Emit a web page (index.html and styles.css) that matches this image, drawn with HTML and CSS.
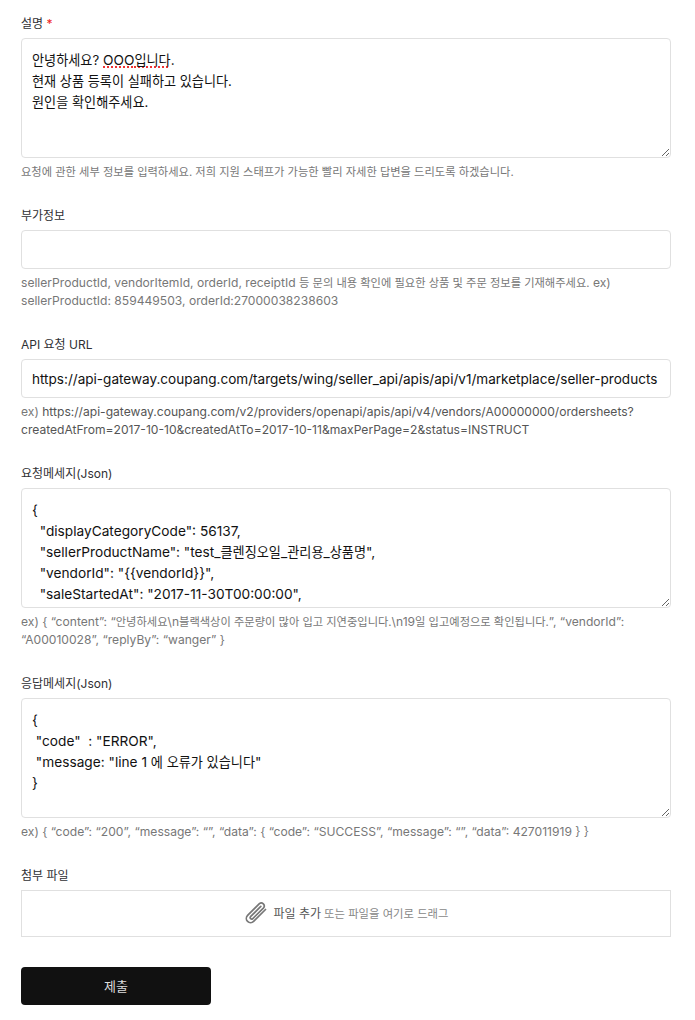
FILE: index.html
```html
<!DOCTYPE html>
<html lang="ko">
<head>
<meta charset="utf-8">
<title>요청 양식</title>
<link rel="stylesheet" href="styles.css">
</head>
<body>
<form class="form">
  <div class="field">
    <label class="label">설명 <span class="req">*</span></label>
    <div class="area"><span class="ko">안녕하세요?</span> <span class="spell">OOO<span class="ko">입니다</span></span>.
<span class="ko">현재 상품 등록이 실패하고 있습니다.
원인을 확인해주세요.</span></div>
    <p class="hint"><span class="ko">요청에 관한 세부 정보를 입력하세요. 저희 지원 스태프가 가능한 빨리 자세한 답변을 드리도록 하겠습니다.</span></p>
  </div>
  <div class="field">
    <label class="label">부가정보</label>
    <div class="input"></div>
    <p class="hint">sellerProductId, vendorItemId, orderId, receiptId <span class="ko">등 문의 내용 확인에 필요한 상품 및 주문 정보를 기재해주세요.</span> ex) sellerProductId: 859449503, orderId:27000038238603</p>
  </div>
  <div class="field">
    <label class="label">API 요청 URL</label>
    <div class="input">https://api-gateway.coupang.com/targets/wing/seller_api/apis/api/v1/marketplace/seller-products</div>
    <p class="hint">ex) <span class="dark">https://api-gateway.coupang.com/v2/providers/openapi/apis/api/v4/vendors/A00000000/ordersheets?createdAtFrom=2017-10-10&amp;createdAtTo=2017-10-11&amp;maxPerPage=2&amp;status=INSTRUCT</span></p>
  </div>
  <div class="field">
    <label class="label">요청메세지(Json)</label>
    <div class="area">{
  "displayCategoryCode": 56137,
  "sellerProductName": "test_<span class="ko">클렌징오일</span>_<span class="ko">관리용</span>_<span class="ko">상품명</span>",
  "vendorId": "{{vendorId}}",
  "saleStartedAt": "2017-11-30T00:00:00",</div>
    <p class="hint">ex) { “content”: “<span class="ko">안녕하세요</span>\n<span class="ko">블랙색상이 주문량이 많아 입고 지연중입니다.</span>\n19<span class="ko">일 입고예정으로 확인됩니다.</span>”, “vendorId”: “A00010028”, “replyBy”: “wanger” }</p>
  </div>
  <div class="field">
    <label class="label">응답메세지(Json)</label>
    <div class="area">{
 "code"  : "ERROR",
 "message: "line 1 <span class="ko">에 오류가 있습니다</span>"
}</div>
    <p class="hint">ex) { “code”: “200”, “message”: “”, “data”: { “code”: “SUCCESS”, “message”: “”, “data”: 427011919 } }</p>
  </div>
  <div class="field">
    <label class="label">첨부 파일</label>
    <div class="drop">
      <svg class="clip" viewBox="0 0 24 24" width="24" height="24" fill="none" stroke="#777" stroke-width="1.7" stroke-linecap="round" stroke-linejoin="round" aria-hidden="true">
        <path d="M21.5 8.5L9.6 20.4a4.2 4.2 0 0 1-6-6L15.4 2.6a3 3 0 0 1 4.2 4.2L8.6 17.8a1.5 1.5 0 0 1-2.1-2.1L16.8 5.4"/>
      </svg>
      <span class="add">파일 추가</span>
      <span class="or">또는 파일을 여기로 드래그</span>
    </div>
  </div>
  <button class="submit" type="button">제출</button>
</form>
</body>
</html>
```
FILE: styles.css
```css
* { box-sizing: border-box; }

body {
  margin: 0;
  background: #fff;
  color: #111;
  font-family: Inter, "Noto Sans CJK KR", "Noto Sans", sans-serif;
}

.form {
  width: 650px;
  margin-left: 21px;
  padding-top: 14px;
  display: flex;
  flex-direction: column;
}

.field {
  display: flex;
  flex-direction: column;
  margin-bottom: 25px;
}

.label {
  display: block;
  height: 20px;
  line-height: 20px;
  margin-bottom: 4px;
  font-size: 12px;
  color: #2f3033;
}

.req { color: #e22; }

.area,
.input {
  border: 1px solid #e0e0e0;
  border-radius: 4px;
  background: #fff;
  font-size: 13.7px;
  line-height: 21px;
  color: #111;
}

.area {
  height: 120px;
  padding: 11px 10px 10px;
  white-space: pre-wrap;
  overflow: hidden;
  resize: vertical;
}

.area .ko { font-size: 0.96em; }

.input {
  height: 39px;
  padding: 9px 10px 8px;
  font-size: 13.56px;
  white-space: nowrap;
  overflow: hidden;
}

.spell {
  text-decoration: underline dotted #e33 2px;
  text-underline-offset: 1px;
}

.hint {
  margin: 5px 0 0;
  font-size: 12.1px;
  line-height: 18px;
  color: #777;
  overflow-wrap: anywhere;
}

.hint .ko { font-size: 0.93em; }

.dark { color: #555; }

.drop {
  height: 47px;
  padding-bottom: 2px;
  border: 1px solid #e0e0e0;
  display: flex;
  align-items: center;
  justify-content: center;
  gap: 3px;
  font-size: 12px;
}

.clip { margin-right: 3px; }

.add { color: #555; }

.or { color: #888; font-size: 11.35px; }

.submit {
  width: 190px;
  height: 38px;
  margin-top: 5px;
  padding-bottom: 3px;
  border: 0;
  border-radius: 4px;
  background: #111;
  color: #ddd;
  font-family: inherit;
  font-size: 13px;
}
```
